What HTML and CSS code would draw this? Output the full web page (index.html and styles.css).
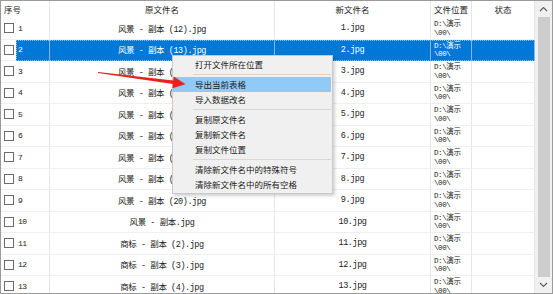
FILE: index.html
```html
<!DOCTYPE html>
<html lang="zh-CN">
<head>
<meta charset="utf-8">
<title>重命名列表</title>
<link rel="stylesheet" href="styles.css">
</head>
<body>
<div class="win">
  <div class="table">
    <div class="hrow">
      <div class="hc c-first left">序号</div>
      <div class="hc c-orig">原文件名</div>
      <div class="hc c-new">新文件名</div>
      <div class="hc c-loc left">文件位置</div>
      <div class="hc c-stat">状态</div>
    </div>

    <div class="row"><div class="chk"><span class="box"></span></div><div class="sel"><div class="cell c-num">1</div><div class="cell c-orig">风景 - 副本 (12).jpg</div><div class="cell c-new">1.jpg</div><div class="cell c-loc">D:\演示<br>\00\</div><div class="cell c-stat"></div></div></div>
    <div class="row"><div class="chk"><span class="box"></span></div><div class="sel on"><div class="cell c-num">2</div><div class="cell c-orig">风景 - 副本 (13).jpg</div><div class="cell c-new">2.jpg</div><div class="cell c-loc">D:\演示<br>\00\</div><div class="cell c-stat"></div></div></div>
    <div class="row"><div class="chk"><span class="box"></span></div><div class="sel"><div class="cell c-num">3</div><div class="cell c-orig">风景 - 副本 (14).jpg</div><div class="cell c-new">3.jpg</div><div class="cell c-loc">D:\演示<br>\00\</div><div class="cell c-stat"></div></div></div>
    <div class="row"><div class="chk"><span class="box"></span></div><div class="sel"><div class="cell c-num">4</div><div class="cell c-orig">风景 - 副本 (15).jpg</div><div class="cell c-new">4.jpg</div><div class="cell c-loc">D:\演示<br>\00\</div><div class="cell c-stat"></div></div></div>
    <div class="row"><div class="chk"><span class="box"></span></div><div class="sel"><div class="cell c-num">5</div><div class="cell c-orig">风景 - 副本 (16).jpg</div><div class="cell c-new">5.jpg</div><div class="cell c-loc">D:\演示<br>\00\</div><div class="cell c-stat"></div></div></div>
    <div class="row"><div class="chk"><span class="box"></span></div><div class="sel"><div class="cell c-num">6</div><div class="cell c-orig">风景 - 副本 (17).jpg</div><div class="cell c-new">6.jpg</div><div class="cell c-loc">D:\演示<br>\00\</div><div class="cell c-stat"></div></div></div>
    <div class="row"><div class="chk"><span class="box"></span></div><div class="sel"><div class="cell c-num">7</div><div class="cell c-orig">风景 - 副本 (18).jpg</div><div class="cell c-new">7.jpg</div><div class="cell c-loc">D:\演示<br>\00\</div><div class="cell c-stat"></div></div></div>
    <div class="row"><div class="chk"><span class="box"></span></div><div class="sel"><div class="cell c-num">8</div><div class="cell c-orig">风景 - 副本 (19).jpg</div><div class="cell c-new">8.jpg</div><div class="cell c-loc">D:\演示<br>\00\</div><div class="cell c-stat"></div></div></div>
    <div class="row"><div class="chk"><span class="box"></span></div><div class="sel"><div class="cell c-num">9</div><div class="cell c-orig">风景 - 副本 (20).jpg</div><div class="cell c-new">9.jpg</div><div class="cell c-loc">D:\演示<br>\00\</div><div class="cell c-stat"></div></div></div>
    <div class="row"><div class="chk"><span class="box"></span></div><div class="sel"><div class="cell c-num">10</div><div class="cell c-orig">风景 - 副本.jpg</div><div class="cell c-new">10.jpg</div><div class="cell c-loc">D:\演示<br>\00\</div><div class="cell c-stat"></div></div></div>
    <div class="row"><div class="chk"><span class="box"></span></div><div class="sel"><div class="cell c-num">11</div><div class="cell c-orig">商标 - 副本 (2).jpg</div><div class="cell c-new">11.jpg</div><div class="cell c-loc">D:\演示<br>\00\</div><div class="cell c-stat"></div></div></div>
    <div class="row"><div class="chk"><span class="box"></span></div><div class="sel"><div class="cell c-num">12</div><div class="cell c-orig">商标 - 副本 (3).jpg</div><div class="cell c-new">12.jpg</div><div class="cell c-loc">D:\演示<br>\00\</div><div class="cell c-stat"></div></div></div>
    <div class="row"><div class="chk"><span class="box"></span></div><div class="sel"><div class="cell c-num">13</div><div class="cell c-orig">商标 - 副本 (4).jpg</div><div class="cell c-new">13.jpg</div><div class="cell c-loc">D:\演示<br>\00\</div><div class="cell c-stat"></div></div></div>
  </div>

  <div class="sb">
    <div class="sb-btn"><svg width="9" height="6" viewBox="0 0 9 6"><polyline points="1,5 4.5,1.5 8,5" fill="none" stroke="#606060" stroke-width="1.2"/></svg></div>
    <div class="sb-track"><div class="sb-thumb"></div></div>
    <div class="sb-btn"><svg width="9" height="6" viewBox="0 0 9 6"><polyline points="1,1 4.5,4.5 8,1" fill="none" stroke="#606060" stroke-width="1.2"/></svg></div>
  </div>
</div>

<div class="menu">
  <div class="mi">打开文件所在位置</div>
  <div class="msep"></div>
  <div class="mi hot">导出当前表格</div>
  <div class="mi">导入数据改名</div>
  <div class="msep"></div>
  <div class="mi">复制原文件名</div>
  <div class="mi">复制新文件名</div>
  <div class="mi">复制文件位置</div>
  <div class="msep"></div>
  <div class="mi">清除新文件名中的特殊符号</div>
  <div class="mi">清除新文件名中的所有空格</div>
</div>

<svg class="arrow" width="553" height="294" viewBox="0 0 553 294">
  <polygon points="98.1,72.0 173.3,80.5 173.8,76.6 185.5,84.2 172.4,88.3 172.9,84.1 97.9,73.0" fill="#e8211d"/>
</svg>
</body>
</html>
```

FILE: styles.css
```css
html, body {
  margin: 0;
  padding: 0;
}

body {
  width: 553px;
  height: 294px;
  overflow: hidden;
  background: #ffffff;
  position: relative;
  font-family: "Noto Sans CJK SC", "Noto Sans", sans-serif;
  color: #1a1a1a;
}

.win {
  display: flex;
  width: 553px;
  height: 294px;
  box-sizing: border-box;
  border: 1px solid #9b9b9b;
  overflow: hidden;
}

.table {
  width: 534px;
  flex-shrink: 0;
  display: flex;
  flex-direction: column;
  overflow: hidden;
}

/* header */
.hrow {
  display: flex;
  height: 17px;
  flex-shrink: 0;
  font-size: 8.5px;
  line-height: 16px;
  color: #222;
}

.hc {
  box-sizing: border-box;
  border-right: 1px solid #e4e4e4;
  text-align: center;
  white-space: nowrap;
  overflow: hidden;
}

.hc.left {
  text-align: left;
  padding-left: 3px;
}

.hc.c-first {
  width: 49px;
}

/* rows */
.row {
  display: flex;
  height: 21.5px;
  flex-shrink: 0;
  font-family: "Liberation Mono", "Noto Sans CJK SC", monospace;
  font-size: 8.5px;
  letter-spacing: -0.45px;
  color: #222;
}

.chk {
  width: 15px;
  flex-shrink: 0;
  box-sizing: border-box;
  border-bottom: 1px solid #efefef;
  display: flex;
  align-items: center;
  padding-left: 3px;
}

.box {
  display: block;
  width: 10px;
  height: 10px;
  box-sizing: border-box;
  border: 1px solid #6a6a6a;
  background: #fff;
}

.sel {
  display: flex;
  flex: 1;
  min-width: 0;
}

.sel.on {
  background: #0078d7;
  color: #ffffff;
  outline: 1px dotted #8fc1ee;
  outline-offset: -1px;
}

.cell {
  box-sizing: border-box;
  border-right: 1px solid #e6e6e6;
  border-bottom: 1px solid #efefef;
  display: flex;
  align-items: center;
  justify-content: center;
  white-space: nowrap;
  overflow: hidden;
}

.sel.on .cell {
  border-right-color: #7fb6e6;
  border-bottom-color: #0078d7;
}

.c-num {
  width: 34px;
  justify-content: flex-start;
  padding-left: 2px;
  font-size: 8px;
}

.c-orig { width: 225px; }
.c-new  { width: 156px; }
.c-loc  { width: 41px; }
.c-stat { width: 63px; }

.cell.c-loc {
  justify-content: flex-start;
  align-items: flex-start;
  padding: 2px 0 0 3px;
  line-height: 8.5px;
  font-size: 7.5px;
  letter-spacing: -0.4px;
  white-space: normal;
}

/* scrollbar */
.sb {
  width: 17px;
  flex-shrink: 0;
  background: #f0f0f0;
  display: flex;
  flex-direction: column;
}

.sb-btn {
  height: 16px;
  display: flex;
  align-items: center;
  justify-content: center;
  flex-shrink: 0;
}

.sb-track {
  flex: 1;
  display: flex;
  padding: 0 2px 0 3px;
}

.sb-thumb {
  flex: 1;
  background: #cdcdcd;
}

/* context menu */
.menu {
  position: absolute;
  left: 172px;
  top: 55px;
  width: 161px;
  box-sizing: border-box;
  background: #f0f0f0;
  border: 1px solid #c9c9c9;
  box-shadow: 2px 2px 3px rgba(0, 0, 0, 0.18);
  padding: 1px 1px 1px 0;
  font-size: 8.5px;
  color: #1a1a1a;
}

.mi {
  height: 15px;
  line-height: 15px;
  padding-left: 22px;
  white-space: nowrap;
}

.mi.hot {
  background: #91c9f7;
}

.msep {
  height: 5px;
  display: flex;
  align-items: center;
  padding-left: 20px;
}

.msep::after {
  content: "";
  display: block;
  flex: 1;
  height: 1px;
  background: #d7d7d7;
}

.arrow {
  position: absolute;
  left: 0;
  top: 0;
  pointer-events: none;
}
```
